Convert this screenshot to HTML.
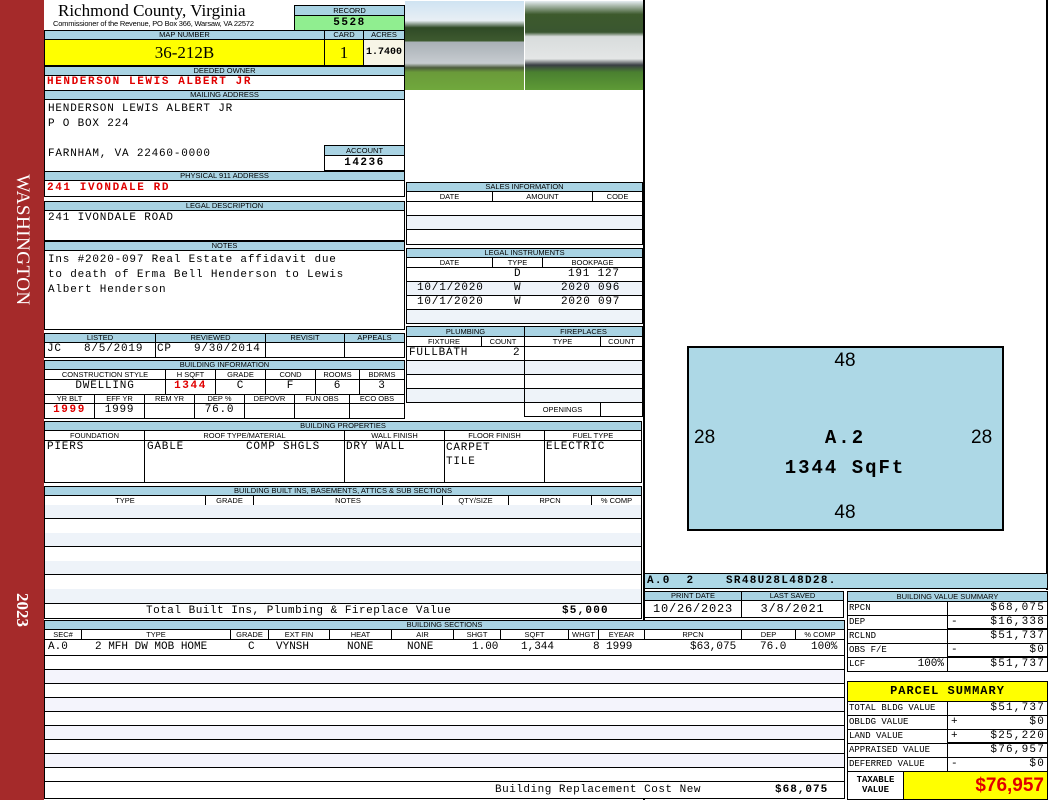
<!DOCTYPE html>
<html><head><meta charset="utf-8"><style>
*{margin:0;padding:0}
body{width:1050px;height:800px;background:#fff;position:relative;overflow:hidden;font-family:"Liberation Sans",sans-serif}
.a{position:absolute;box-sizing:border-box}
.h{position:absolute;box-sizing:border-box;background:#a9d3e3;border:1px solid #000;font-size:7.5px;text-align:center;line-height:8px;white-space:nowrap;overflow:hidden;color:#000}
.c{position:absolute;box-sizing:border-box;border:1px solid #000;font-family:"Liberation Mono",monospace;font-size:11px;line-height:13px;white-space:nowrap;overflow:hidden;background:#fff;letter-spacing:0.8px}
.s{position:absolute;box-sizing:border-box;border:1px solid #000;font-size:7.5px;text-align:center;line-height:9px;white-space:nowrap;background:#fff}
.r{color:#e00000;font-weight:bold;letter-spacing:1.6px}
.lt{background:#eef3f9}
.lv{background:#f4f4fc}
.ctr{text-align:center}
.rt{text-align:right;padding-right:2px;letter-spacing:1.2px}
.n{letter-spacing:0}
</style></head><body>
<div class="a" style="left:0;top:0;width:44px;height:800px;background:#a52a2a"></div>
<div class="a" style="left:12px;top:155px;width:20px;height:170px;"><div style="position:absolute;left:-75px;top:75px;width:170px;height:20px;transform:rotate(90deg);color:#fff;font:19px 'Liberation Serif',serif;text-align:center;line-height:20px;letter-spacing:0.5px">WASHINGTON</div></div>
<div class="a" style="left:12px;top:590px;width:20px;height:40px;"><div style="position:absolute;left:-10px;top:10px;width:40px;height:20px;transform:rotate(90deg);color:#fff;font:bold 17px 'Liberation Serif',serif;text-align:center;line-height:20px">2023</div></div>

<div class="a" style="left:58px;top:1px;font:17px 'Liberation Serif',serif;line-height:20px">Richmond County, Virginia</div>
<div class="a" style="left:53px;top:19px;font-size:7.5px;line-height:9px;white-space:nowrap;letter-spacing:-0.2px">Commissioner of the Revenue, PO Box 366, Warsaw, VA 22572</div>
<div class="h" style="left:294px;top:5px;width:111px;height:11px;line-height:9px">RECORD</div>
<div class="a" style="left:294px;top:15px;width:111px;height:16px;background:#90ee90;border:1px solid #000;font:bold 11px 'Liberation Mono',monospace;text-align:center;line-height:14px;letter-spacing:1.5px">5528</div>
<div class="h" style="left:44px;top:30px;width:281px;height:10px">MAP NUMBER</div>
<div class="h" style="left:324px;top:30px;width:40px;height:10px">CARD</div>
<div class="h" style="left:363px;top:30px;width:42px;height:10px">ACRES</div>
<div class="a" style="left:44px;top:39px;width:281px;height:27px;background:#ffff00;border:1px solid #000;font:17px 'Liberation Serif',serif;text-align:center;line-height:25px">36-212B</div>
<div class="a" style="left:324px;top:39px;width:40px;height:27px;background:#ffff00;border:1px solid #000;font:17px 'Liberation Serif',serif;text-align:center;line-height:25px">1</div>
<div class="a" style="left:363px;top:39px;width:42px;height:27px;background:#f7f5e6;border:1px solid #000;font:bold 10px 'Liberation Mono',monospace;text-align:center;line-height:25px;letter-spacing:0">1.7400</div>
<div class="h" style="left:44px;top:66px;width:361px;height:10px">DEEDED OWNER</div>
<div class="c r" style="left:44px;top:75px;width:361px;height:16px;padding-left:2px">HENDERSON LEWIS ALBERT JR</div>
<div class="h" style="left:44px;top:90px;width:361px;height:10px">MAILING ADDRESS</div>
<div class="c" style="left:44px;top:99px;width:361px;height:73px;padding:2px 0 0 3px;line-height:15px">HENDERSON LEWIS ALBERT JR<br>P O BOX 224<br><br>FARNHAM, VA 22460-0000</div>
<div class="h" style="left:324px;top:145px;width:81px;height:11px;line-height:9px">ACCOUNT</div>
<div class="c ctr" style="left:324px;top:155px;width:81px;height:16px;font-weight:bold;line-height:14px;letter-spacing:1.5px">14236</div>
<div class="h" style="left:44px;top:171px;width:361px;height:10px">PHYSICAL 911 ADDRESS</div>
<div class="c r" style="left:44px;top:180px;width:361px;height:17px;padding-left:2px;line-height:15px">241 IVONDALE RD</div>
<div class="h" style="left:44px;top:201px;width:361px;height:10px">LEGAL DESCRIPTION</div>
<div class="c" style="left:44px;top:210px;width:361px;height:31px;padding:1px 0 0 3px">241 IVONDALE ROAD</div>
<div class="h" style="left:44px;top:241px;width:361px;height:10px">NOTES</div>
<div class="c" style="left:44px;top:250px;width:361px;height:80px;padding:2px 0 0 3px;line-height:15px">Ins #2020-097 Real Estate affidavit due<br>to death of Erma Bell Henderson to Lewis<br>Albert Henderson</div>

<div class="h" style="left:44px;top:333px;width:112px;height:10px">LISTED</div>
<div class="h" style="left:155px;top:333px;width:111px;height:10px">REVIEWED</div>
<div class="h" style="left:265px;top:333px;width:80px;height:10px">REVISIT</div>
<div class="h" style="left:344px;top:333px;width:61px;height:10px">APPEALS</div>
<div class="c" style="left:44px;top:342px;width:112px;height:16px;padding-left:2px">JC&nbsp;&nbsp;&nbsp;8/5/2019</div>
<div class="c" style="left:155px;top:342px;width:111px;height:16px;padding-left:1px">CP&nbsp;&nbsp;&nbsp;9/30/2014</div>
<div class="c" style="left:265px;top:342px;width:80px;height:16px"></div>
<div class="c" style="left:344px;top:342px;width:61px;height:16px"></div>

<div class="h" style="left:44px;top:360px;width:361px;height:10px">BUILDING INFORMATION</div>
<div class="s" style="left:44px;top:369px;width:122px;height:11px">CONSTRUCTION STYLE</div>
<div class="s" style="left:165px;top:369px;width:51px;height:11px">H SQFT</div>
<div class="s" style="left:215px;top:369px;width:51px;height:11px">GRADE</div>
<div class="s" style="left:265px;top:369px;width:51px;height:11px">COND</div>
<div class="s" style="left:315px;top:369px;width:45px;height:11px">ROOMS</div>
<div class="s" style="left:359px;top:369px;width:46px;height:11px">BDRMS</div>
<div class="c ctr" style="left:44px;top:379px;width:122px;height:16px">DWELLING</div>
<div class="c ctr r" style="left:165px;top:379px;width:51px;height:16px">1344</div>
<div class="c ctr" style="left:215px;top:379px;width:51px;height:16px">C</div>
<div class="c ctr" style="left:265px;top:379px;width:51px;height:16px">F</div>
<div class="c ctr" style="left:315px;top:379px;width:45px;height:16px">6</div>
<div class="c ctr" style="left:359px;top:379px;width:46px;height:16px">3</div>
<div class="s" style="left:44px;top:394px;width:51px;height:10px;line-height:8px">YR BLT</div>
<div class="s" style="left:94px;top:394px;width:51px;height:10px;line-height:8px">EFF YR</div>
<div class="s" style="left:144px;top:394px;width:51px;height:10px;line-height:8px">REM YR</div>
<div class="s" style="left:194px;top:394px;width:51px;height:10px;line-height:8px">DEP %</div>
<div class="s" style="left:244px;top:394px;width:51px;height:10px;line-height:8px">DEPOVR</div>
<div class="s" style="left:294px;top:394px;width:56px;height:10px;line-height:8px">FUN OBS</div>
<div class="s" style="left:349px;top:394px;width:56px;height:10px;line-height:8px">ECO OBS</div>
<div class="c ctr r" style="left:44px;top:403px;width:51px;height:16px">1999</div>
<div class="c ctr" style="left:94px;top:403px;width:51px;height:16px">1999</div>
<div class="c" style="left:144px;top:403px;width:51px;height:16px"></div>
<div class="c ctr" style="left:194px;top:403px;width:51px;height:16px">76.0</div>
<div class="c" style="left:244px;top:403px;width:51px;height:16px"></div>
<div class="c" style="left:294px;top:403px;width:56px;height:16px"></div>
<div class="c" style="left:349px;top:403px;width:56px;height:16px"></div>

<div class="h" style="left:44px;top:421px;width:598px;height:10px">BUILDING PROPERTIES</div>
<div class="s" style="left:44px;top:430px;width:101px;height:11px">FOUNDATION</div>
<div class="s" style="left:144px;top:430px;width:201px;height:11px">ROOF TYPE/MATERIAL</div>
<div class="s" style="left:344px;top:430px;width:101px;height:11px">WALL FINISH</div>
<div class="s" style="left:444px;top:430px;width:101px;height:11px">FLOOR FINISH</div>
<div class="s" style="left:544px;top:430px;width:98px;height:11px">FUEL TYPE</div>
<div class="c" style="left:44px;top:440px;width:101px;height:43px;padding-left:2px">PIERS</div>
<div class="c" style="left:144px;top:440px;width:201px;height:43px;padding-left:2px">GABLE<span style="position:absolute;left:101px">COMP SHGLS</span></div>
<div class="c" style="left:344px;top:440px;width:101px;height:43px;padding-left:1px">DRY WALL</div>
<div class="c" style="left:444px;top:440px;width:101px;height:43px;padding-left:1px;line-height:14px">CARPET<br>TILE</div>
<div class="c" style="left:544px;top:440px;width:98px;height:43px;padding-left:1px">ELECTRIC</div>

<div class="h" style="left:44px;top:486px;width:598px;height:10px">BUILDING BUILT INS, BASEMENTS, ATTICS &amp; SUB SECTIONS</div>
<div class="s" style="left:44px;top:495px;width:162px;height:11px">TYPE</div>
<div class="s" style="left:205px;top:495px;width:49px;height:11px">GRADE</div>
<div class="s" style="left:253px;top:495px;width:190px;height:11px">NOTES</div>
<div class="s" style="left:442px;top:495px;width:67px;height:11px">QTY/SIZE</div>
<div class="s" style="left:508px;top:495px;width:84px;height:11px">RPCN</div>
<div class="s" style="left:591px;top:495px;width:51px;height:11px">% COMP</div>
<div class="a lt" style="left:44px;top:505px;width:598px;height:14px;border-left:1px solid #000;border-right:1px solid #000;border-bottom:1px solid #000"></div>
<div class="a" style="left:44px;top:519px;width:598px;height:14px;border-left:1px solid #000;border-right:1px solid #000"></div>
<div class="a lt" style="left:44px;top:533px;width:598px;height:14px;border-left:1px solid #000;border-right:1px solid #000;border-bottom:1px solid #000"></div>
<div class="a" style="left:44px;top:547px;width:598px;height:14px;border-left:1px solid #000;border-right:1px solid #000"></div>
<div class="a lt" style="left:44px;top:561px;width:598px;height:14px;border-left:1px solid #000;border-right:1px solid #000;border-bottom:1px solid #000"></div>
<div class="a" style="left:44px;top:575px;width:598px;height:14px;border-left:1px solid #000;border-right:1px solid #000"></div>
<div class="a lt" style="left:44px;top:589px;width:598px;height:15px;border-left:1px solid #000;border-right:1px solid #000;border-bottom:1px solid #000"></div>
<div class="c" style="left:44px;top:603px;width:598px;height:16px;line-height:15px;letter-spacing:0.5px"><span style="position:absolute;left:101px">Total Built Ins, Plumbing &amp; Fireplace Value</span><span style="position:absolute;left:517px;font-weight:bold;letter-spacing:1.2px">$5,000</span></div>

<div class="a" style="left:405px;top:1px;width:119px;height:89px;background:linear-gradient(#cfe3f2 0%,#e8eff5 22%,#2f4a26 30%,#3e5a2f 45%,#a9b0b6 46%,#c7ccd0 70%,#4c5c3c 75%,#6a9a3a 80%,#70a83c 100%)"></div>
<div class="a" style="left:525px;top:1px;width:118px;height:89px;background:linear-gradient(#e6edf2 0%,#3d5a2c 15%,#3a5630 35%,#d8dcdc 40%,#e4e6e6 65%,#3a3e44 72%,#4a8030 80%,#5e9a36 100%)"></div>
<div class="a" style="left:643px;top:0;width:2px;height:800px;background:#000"></div>

<div class="h" style="left:406px;top:182px;width:237px;height:10px">SALES INFORMATION</div>
<div class="s" style="left:406px;top:191px;width:87px;height:11px">DATE</div>
<div class="s" style="left:492px;top:191px;width:101px;height:11px">AMOUNT</div>
<div class="s" style="left:592px;top:191px;width:51px;height:11px">CODE</div>
<div class="c" style="left:406px;top:201px;width:237px;height:15px"></div>
<div class="c lt" style="left:406px;top:215px;width:237px;height:15px"></div>
<div class="c" style="left:406px;top:229px;width:237px;height:16px"></div>
<div class="h" style="left:406px;top:248px;width:237px;height:10px">LEGAL INSTRUMENTS</div>
<div class="s" style="left:406px;top:257px;width:87px;height:11px">DATE</div>
<div class="s" style="left:492px;top:257px;width:51px;height:11px">TYPE</div>
<div class="s" style="left:542px;top:257px;width:101px;height:11px">BOOKPAGE</div>
<div class="c" style="left:406px;top:267px;width:237px;height:15px"><span style="position:absolute;left:107px">D</span><span style="position:absolute;left:161px">191 127</span></div>
<div class="c lt" style="left:406px;top:281px;width:237px;height:15px"><span style="position:absolute;left:10px">10/1/2020</span><span style="position:absolute;left:107px">W</span><span style="position:absolute;left:154px">2020 096</span></div>
<div class="c" style="left:406px;top:295px;width:237px;height:15px"><span style="position:absolute;left:10px">10/1/2020</span><span style="position:absolute;left:107px">W</span><span style="position:absolute;left:154px">2020 097</span></div>
<div class="c lt" style="left:406px;top:309px;width:237px;height:15px"></div>

<div class="h" style="left:406px;top:326px;width:119px;height:11px;line-height:9px">PLUMBING</div>
<div class="h" style="left:524px;top:326px;width:119px;height:11px;line-height:9px">FIREPLACES</div>
<div class="s" style="left:406px;top:336px;width:76px;height:11px">FIXTURE</div>
<div class="s" style="left:481px;top:336px;width:44px;height:11px">COUNT</div>
<div class="s" style="left:524px;top:336px;width:77px;height:11px">TYPE</div>
<div class="s" style="left:600px;top:336px;width:43px;height:11px">COUNT</div>
<div class="c" style="left:406px;top:346px;width:119px;height:15px;padding-left:2px">FULLBATH<span style="position:absolute;left:106px">2</span></div>
<div class="c lt" style="left:406px;top:360px;width:119px;height:15px"></div>
<div class="c" style="left:406px;top:374px;width:119px;height:15px"></div>
<div class="c lt" style="left:406px;top:388px;width:119px;height:15px"></div>
<div class="c" style="left:524px;top:346px;width:119px;height:15px"></div>
<div class="c lt" style="left:524px;top:360px;width:119px;height:15px"></div>
<div class="c" style="left:524px;top:374px;width:119px;height:15px"></div>
<div class="c lt" style="left:524px;top:388px;width:119px;height:15px"></div>
<div class="s" style="left:524px;top:402px;width:77px;height:15px;line-height:13px">OPENINGS</div>
<div class="c" style="left:600px;top:402px;width:43px;height:15px"></div>

<div class="a" style="left:1046px;top:0;width:2px;height:590px;background:#000"></div>
<div class="a" style="left:687px;top:346px;width:317px;height:185px;background:#add8e6;border:2px solid #000"></div>
<div class="a" style="left:820px;top:350px;width:50px;font:19px 'Liberation Sans',sans-serif;text-align:center">48</div>
<div class="a" style="left:820px;top:502px;width:50px;font:19px 'Liberation Sans',sans-serif;text-align:center">48</div>
<div class="a" style="left:694px;top:427px;font:19px 'Liberation Sans',sans-serif">28</div>
<div class="a" style="left:971px;top:427px;font:19px 'Liberation Sans',sans-serif">28</div>
<div class="a" style="left:780px;top:427px;width:130px;font:bold 19px 'Liberation Mono',monospace;text-align:center;line-height:22px;letter-spacing:2px">A.2</div>
<div class="a" style="left:755px;top:457px;width:180px;font:bold 19px 'Liberation Mono',monospace;text-align:center;line-height:22px;letter-spacing:2px">1344 SqFt</div>
<div class="a" style="left:644px;top:573px;width:404px;height:16px;background:#add8e6;border:1px solid #000;font:bold 11px 'Liberation Mono',monospace;line-height:14px;padding-left:2px;white-space:pre;letter-spacing:1.3px">A.0  2    SR48U28L48D28.</div>

<div class="h" style="left:644px;top:591px;width:98px;height:10px">PRINT DATE</div>
<div class="h" style="left:741px;top:591px;width:103px;height:10px">LAST SAVED</div>
<div class="c ctr" style="left:644px;top:600px;width:98px;height:18px;font-size:12px;line-height:16px">10/26/2023</div>
<div class="c ctr" style="left:741px;top:600px;width:103px;height:18px;font-size:12px;line-height:16px">3/8/2021</div>

<div class="h" style="left:44px;top:620px;width:801px;height:10px">BUILDING SECTIONS</div>
<div class="s" style="left:44px;top:629px;width:38px;height:11px">SEC#</div>
<div class="s" style="left:81px;top:629px;width:150px;height:11px">TYPE</div>
<div class="s" style="left:230px;top:629px;width:39px;height:11px">GRADE</div>
<div class="s" style="left:268px;top:629px;width:62px;height:11px">EXT FIN</div>
<div class="s" style="left:329px;top:629px;width:63px;height:11px">HEAT</div>
<div class="s" style="left:391px;top:629px;width:63px;height:11px">AIR</div>
<div class="s" style="left:453px;top:629px;width:48px;height:11px">SHGT</div>
<div class="s" style="left:500px;top:629px;width:69px;height:11px">SQFT</div>
<div class="s" style="left:568px;top:629px;width:31px;height:11px">WHGT</div>
<div class="s" style="left:598px;top:629px;width:47px;height:11px">EYEAR</div>
<div class="s" style="left:644px;top:629px;width:98px;height:11px">RPCN</div>
<div class="s" style="left:741px;top:629px;width:55px;height:11px">DEP</div>
<div class="s" style="left:795px;top:629px;width:50px;height:11px">% COMP</div>
<div class="c n" style="left:44px;top:639px;width:801px;height:17px;line-height:15px;white-space:pre"><span style="position:absolute;left:3px">A.0</span><span style="position:absolute;left:50px">2 MFH DW MOB HOME</span><span style="position:absolute;left:203px">C</span><span style="position:absolute;left:231px">VYNSH</span><span style="position:absolute;left:302px">NONE</span><span style="position:absolute;left:362px">NONE</span><span style="position:absolute;left:427px">1.00</span><span style="position:absolute;left:476px">1,344</span><span style="position:absolute;left:548px">8</span><span style="position:absolute;left:561px">1999</span><span style="position:absolute;left:645px">$63,075</span><span style="position:absolute;left:715px">76.0</span><span style="position:absolute;left:766px">100%</span></div>
<div class="c" style="left:44px;top:655px;width:801px;height:15px"></div>
<div class="c lv" style="left:44px;top:669px;width:801px;height:15px"></div>
<div class="c" style="left:44px;top:683px;width:801px;height:15px"></div>
<div class="c lv" style="left:44px;top:697px;width:801px;height:15px"></div>
<div class="c" style="left:44px;top:711px;width:801px;height:15px"></div>
<div class="c lv" style="left:44px;top:725px;width:801px;height:15px"></div>
<div class="c" style="left:44px;top:739px;width:801px;height:15px"></div>
<div class="c lv" style="left:44px;top:753px;width:801px;height:15px"></div>
<div class="c" style="left:44px;top:767px;width:801px;height:15px"></div>
<div class="c" style="left:44px;top:781px;width:801px;height:18px;line-height:17px;letter-spacing:0.5px"><span style="position:absolute;left:450px">Building Replacement Cost New</span><span style="position:absolute;left:730px;font-weight:bold;letter-spacing:1px">$68,075</span></div>

<div class="h" style="left:847px;top:591px;width:201px;height:11px;line-height:9px">BUILDING VALUE SUMMARY</div>
<div class="c n" style="left:847px;top:601px;width:101px;height:15px;font-size:9px;padding-left:1px">RPCN</div>
<div class="c rt" style="left:947px;top:601px;width:101px;height:15px">$68,075</div>
<div class="c n" style="left:847px;top:615px;width:101px;height:15px;font-size:9px;padding-left:1px">DEP</div>
<div class="c rt" style="left:947px;top:615px;width:101px;height:16px;border-bottom:3px solid #000"><span style="position:absolute;left:3px">-</span>$16,338</div>
<div class="c n" style="left:847px;top:629px;width:101px;height:15px;font-size:9px;padding-left:1px">RCLND</div>
<div class="c rt" style="left:947px;top:629px;width:101px;height:15px">$51,737</div>
<div class="c n" style="left:847px;top:643px;width:101px;height:15px;font-size:9px;padding-left:1px">OBS F/E</div>
<div class="c rt" style="left:947px;top:643px;width:101px;height:16px;border-bottom:3px solid #000"><span style="position:absolute;left:3px">-</span>$0</div>
<div class="c n" style="left:847px;top:657px;width:101px;height:15px;font-size:9px;padding-left:1px">LCF<span style="position:absolute;right:3px;font-size:11px">100%</span></div>
<div class="c rt" style="left:947px;top:657px;width:101px;height:15px">$51,737</div>

<div class="a" style="left:847px;top:681px;width:201px;height:21px;background:#ffff00;border:1px solid #000;font:bold 12px 'Liberation Mono',monospace;text-align:center;line-height:19px;letter-spacing:1px">PARCEL SUMMARY</div>
<div class="c n" style="left:847px;top:701px;width:101px;height:15px;font-size:9px;padding-left:1px">TOTAL BLDG VALUE</div>
<div class="c rt" style="left:947px;top:701px;width:101px;height:15px">$51,737</div>
<div class="c n" style="left:847px;top:715px;width:101px;height:15px;font-size:9px;padding-left:1px">OBLDG VALUE</div>
<div class="c rt" style="left:947px;top:715px;width:101px;height:15px"><span style="position:absolute;left:3px">+</span>$0</div>
<div class="c n" style="left:847px;top:729px;width:101px;height:15px;font-size:9px;padding-left:1px">LAND VALUE</div>
<div class="c rt" style="left:947px;top:729px;width:101px;height:16px;border-bottom:3px solid #000"><span style="position:absolute;left:3px">+</span>$25,220</div>
<div class="c n" style="left:847px;top:743px;width:101px;height:15px;font-size:9px;padding-left:1px">APPRAISED VALUE</div>
<div class="c rt" style="left:947px;top:743px;width:101px;height:15px">$76,957</div>
<div class="c n" style="left:847px;top:757px;width:101px;height:15px;font-size:9px;padding-left:1px">DEFERRED VALUE</div>
<div class="c rt" style="left:947px;top:757px;width:101px;height:15px"><span style="position:absolute;left:3px">-</span>$0</div>
<div class="c ctr n" style="left:847px;top:771px;width:57px;height:29px;font-size:9px;line-height:10px;padding-top:3px;font-weight:bold">TAXABLE<br>VALUE</div>
<div class="a" style="left:903px;top:771px;width:145px;height:29px;background:#ffff00;border:1px solid #000;color:#e00000;font:bold 19px 'Liberation Sans',sans-serif;text-align:right;padding-right:3px;line-height:27px">$76,957</div>
</body></html>
